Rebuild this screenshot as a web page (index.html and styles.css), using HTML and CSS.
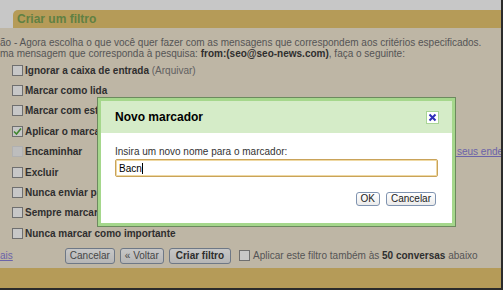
FILE: index.html
```html
<!DOCTYPE html>
<html lang="pt-BR">

<head>
    <meta charset="UTF-8">
    <meta name="viewport" content="width=device-width, initial-scale=1.0">
    <title>Criar um filtro</title>
    <link rel="stylesheet" href="styles.css">
</head>

<body>

    <div class="window">
        <div class="top-space"></div>

        <div class="filter-head">
            <h2>Criar um filtro</h2>
        </div>

        <div class="filter-body">
            <p class="desc">ão - Agora escolha o que você quer fazer com as mensagens que correspondem aos critérios especificados.<br>
                ma mensagem que corresponda à pesquisa: <b>from:(seo@seo-news.com)</b>, faça o seguinte:</p>

            <div class="action"><span class="cb"></span><b>Ignorar a caixa de entrada</b>&nbsp;<span class="hint">(Arquivar)</span></div>
            <div class="action"><span class="cb"></span><b>Marcar como lida</b></div>
            <div class="action"><span class="cb"></span><b>Marcar com estrela</b></div>
            <div class="action"><span class="cb checked"><svg width="9" height="9" viewBox="0 0 9 9"><path d="M1 4.5 L3.5 7 L8 1.5" fill="none" stroke="#55ad3c" stroke-width="1.6"/></svg></span><b>Aplicar o marcador:</b></div>
            <div class="action"><span class="cb disabled"></span><b>Encaminhar</b><span class="fwd-note">Você só pode encaminhar para endereços verificados.</span><a href="#" class="link fwd-link">Gerenciar seus endereços</a></div>
            <div class="action"><span class="cb"></span><b>Excluir</b></div>
            <div class="action"><span class="cb"></span><b>Nunca enviar para o spam</b></div>
            <div class="action"><span class="cb"></span><b>Sempre marcar como importante</b></div>
            <div class="action"><span class="cb"></span><b>Nunca marcar como importante</b></div>

            <div class="buttons">
                <a href="#" class="link more">ais</a>
                <button class="btn">Cancelar</button>
                <button class="btn">« Voltar</button>
                <button class="btn primary">Criar filtro</button>
                <span class="cb apply-cb"></span>
                <span class="apply">Aplicar este filtro também às <b>50 conversas</b> abaixo</span>
            </div>
        </div>

        <div class="filter-foot"></div>
    </div>

    <div class="overlay"></div>

    <div class="modal">
        <div class="modal-inner">
            <div class="modal-head">
                <h3>Novo marcador</h3>
                <span class="close"><svg width="11" height="11" viewBox="0 0 11 11"><path d="M2.5 2.5 L8.5 8.5 M8.5 2.5 L2.5 8.5" stroke="#2f2fb9" stroke-width="2"/></svg></span>
            </div>
            <div class="modal-body">
                <label for="label-name">Insira um novo nome para o marcador:</label>
                <div class="field"><span>Bacn</span><span class="caret"></span></div>
                <div class="modal-buttons">
                    <button class="dlg-btn">OK</button>
                    <button class="dlg-btn">Cancelar</button>
                </div>
            </div>
        </div>
    </div>

</body>

</html>
```

FILE: styles.css
```css
body {
    margin: 0;
    font-family: Arial, "Liberation Sans", sans-serif;
    background-color: #fff;
    overflow: hidden;
}

.window {
    width: 501px;
    height: 288px;
    border-right: 2px solid #383838;
    border-bottom: 2px solid #383838;
    display: flex;
    flex-direction: column;
    overflow: hidden;
}

.top-space {
    height: 10px;
}

.filter-head {
    height: 18px;
    margin-left: 13px;
    background-color: #e8c771;
    border-top-left-radius: 5px;
}

.filter-head h2 {
    margin: 0;
    padding-left: 4px;
    font-size: 12px;
    line-height: 19px;
    color: #7ca556;
}

.filter-body {
    height: 240px;
    background-color: #f4e9d4;
    font-size: 10px;
    color: #3c3c3c;
    white-space: nowrap;
}

.desc {
    margin: 0 0 1px;
    padding-top: 9px;
    line-height: 11px;
    color: #6e6e6e;
}

.desc b {
    color: #3c3c3c;
}

.action {
    display: flex;
    align-items: center;
    height: 20.4px;
    padding-left: 12px;
}

.cb {
    width: 11px;
    height: 11px;
    box-sizing: border-box;
    border: 1px solid #8f8f8f;
    background-color: #fff;
    margin-right: 2px;
    display: flex;
    align-items: center;
    justify-content: center;
    flex-shrink: 0;
}

.cb.disabled {
    border-color: #e2e2e2;
    background-color: #f3f3f3;
}

.hint {
    color: #7c7c7c;
}

.fwd-note {
    margin-left: 15px;
    width: 313px;
    flex-shrink: 0;
    overflow: hidden;
    color: #6e6e6e;
}

.fwd-link {
    flex-shrink: 0;
}

.link {
    color: #8a80d8;
    text-decoration: underline;
}

.buttons {
    display: flex;
    align-items: center;
    gap: 5px;
    height: 16px;
    margin-top: 4.4px;
}

.more {
    margin-right: 47px;
}

.btn {
    height: 16px;
    padding: 0 4px;
    font-family: Arial, "Liberation Sans", sans-serif;
    font-size: 10px;
    color: #5a5a5a;
    background: linear-gradient(#fff, #e9e9e9);
    border: 1px solid #8d9aac;
    border-radius: 3px;
}

.btn.primary {
    padding: 0 6px;
    font-weight: bold;
    color: #3a3a3a;
}

.apply-cb {
    margin-left: 3px;
    margin-right: 0;
}

.apply {
    margin-left: -2px;
    color: #6e6e6e;
}

.apply b {
    color: #3c3c3c;
}

.filter-foot {
    flex: 1;
    background-color: #e8c771;
}

.overlay {
    position: fixed;
    inset: 0;
    background-color: rgba(0, 0, 0, 0.22);
}

/* dialog */
.modal {
    position: absolute;
    left: 97px;
    top: 97px;
    width: 359px;
    height: 130px;
    box-sizing: border-box;
    border: 1px solid #6c8a5e;
}

.modal-inner {
    height: 100%;
    box-sizing: border-box;
    border: 3px solid #a5d78c;
    background-color: #fff;
}

.modal-head {
    height: 32px;
    display: flex;
    align-items: center;
    justify-content: space-between;
    padding: 0 13px 0 14px;
    background-color: #d5ecc8;
}

.modal-head h3 {
    margin: 0;
    font-size: 12px;
    color: #000;
}

.close {
    width: 13px;
    height: 13px;
    box-sizing: border-box;
    border: 1px solid #a9d596;
    background-color: #fff;
    display: flex;
    align-items: center;
    justify-content: center;
}

.modal-body {
    padding: 13px 14px 0;
    font-size: 10px;
    color: #333;
}

.modal-body label {
    display: block;
    line-height: 12px;
    margin-bottom: 1px;
}

.field {
    height: 18px;
    box-sizing: border-box;
    border: 1px solid #c9a35a;
    box-shadow: inset 0 0 0 1px #efd9a3;
    border-radius: 2px;
    padding-left: 3px;
    display: flex;
    align-items: center;
    color: #000;
}

.caret {
    width: 1px;
    height: 11px;
    background-color: #000;
}

.modal-buttons {
    display: flex;
    justify-content: flex-end;
    gap: 6px;
    margin-top: 15px;
    padding-right: 2px;
}

.dlg-btn {
    height: 14px;
    padding: 0 4px;
    font-family: Arial, "Liberation Sans", sans-serif;
    font-size: 10px;
    line-height: 12px;
    color: #222;
    background: linear-gradient(#fff, #ebebeb);
    border: 1px solid #7f93b0;
    border-radius: 3px;
}
```
